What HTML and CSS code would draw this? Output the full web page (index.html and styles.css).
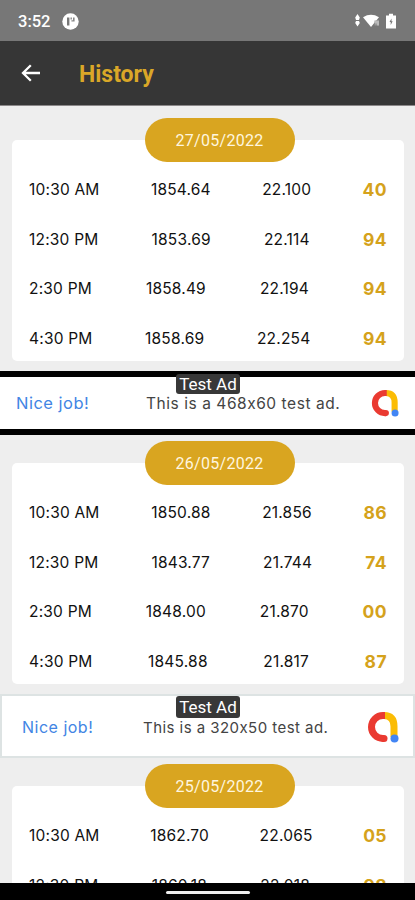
FILE: index.html
```
<!DOCTYPE html>
<html lang="en">
<head>
	<meta charset="utf-8">
	<meta name="viewport" content="width=device-width, initial-scale=1">
	<title>History</title>
	<link rel="stylesheet" href="styles.css">
</head>
<body>

	<div class="screen">

		<div class="status">
			<span class="clock">3:52</span>
			<svg class="app-dot" width="17" height="17" viewBox="0 0 17 17"><circle cx="8.5" cy="8.5" r="8.2" fill="#fff"/><path d="M5 12.5V4.5h2.4v8z" fill="#777"/><path d="M8.5 4.5h1.4v2H8.5zM11 4.5h1.6v4H9.4V7.2H11z" fill="#888"/></svg>
			<svg class="signals" width="44" height="18" viewBox="0 0 44 18">
				<path d="M3.5 2L5.8 5.5 5 8H2L1.2 5.5zM3.5 14.5L1.2 11 2 9h3l.8 2z" fill="#fff"/>
				<path d="M9 5.2Q17 .5 25 5.2L17 15z" fill="#fff"/>
				<path d="M20.5 8.5h4.5v5h-4.5z" fill="#999"/>
				<path d="M22 8.5v3M24 8.5v5" stroke="#ddd" stroke-width="1"/>
				<path d="M32 3.5h3V1.8h4v1.7h3v13H32z" fill="#fff"/>
				<path d="M37.5 6.5l-2 3.5h1.2v3l2-3.8h-1.2z" fill="#777"/>
			</svg>
		</div>

		<div class="toolbar">
			<svg width="20" height="18" viewBox="0 0 20 18"><path d="M19 9H2M9.8 1.2L2 9l7.8 7.8" fill="none" stroke="#fff" stroke-width="2.3"/></svg>
			<h1>History</h1>
		</div>

		<div class="content">

			<div class="day">
				<div class="date">27/05/2022</div>
				<div class="card">
					<div class="row"><span>10:30 AM</span><span>1854.64</span><span>22.100</span><b>40</b></div>
					<div class="row"><span>12:30 PM</span><span>1853.69</span><span>22.114</span><b>94</b></div>
					<div class="row"><span>2:30 PM</span><span>1858.49</span><span>22.194</span><b>94</b></div>
					<div class="row"><span>4:30 PM</span><span>1858.69</span><span>22.254</span><b>94</b></div>
				</div>
			</div>

			<div class="ad ad-wide">
				<span class="tag">Test Ad</span>
				<span class="nice">Nice job!</span>
				<span class="msg">This is a 468x60 test ad.</span>
				<svg class="logo" viewBox="0 0 32 32"><path d="M16 4.5h1q10 0 10 11V26" fill="none" stroke="#fbbc04" stroke-width="7"/><path d="M18 4.5h-2a11.5 11.5 0 0 0 0 23h1" fill="none" stroke="#ea3a31" stroke-width="7"/><circle cx="17" cy="27.5" r="3.5" fill="#ea3a31"/><circle cx="27.5" cy="27.5" r="4" fill="#4285f4"/></svg>
			</div>

			<div class="day">
				<div class="date">26/05/2022</div>
				<div class="card">
					<div class="row"><span>10:30 AM</span><span>1850.88</span><span>21.856</span><b>86</b></div>
					<div class="row"><span>12:30 PM</span><span>1843.77</span><span>21.744</span><b>74</b></div>
					<div class="row"><span>2:30 PM</span><span>1848.00</span><span>21.870</span><b>00</b></div>
					<div class="row"><span>4:30 PM</span><span>1845.88</span><span>21.817</span><b>87</b></div>
				</div>
			</div>

			<div class="ad ad-small">
				<span class="tag">Test Ad</span>
				<span class="nice">Nice job!</span>
				<span class="msg">This is a 320x50 test ad.</span>
				<svg class="logo" viewBox="0 0 32 32"><path d="M16 4.5h1q10 0 10 11V26" fill="none" stroke="#fbbc04" stroke-width="7"/><path d="M18 4.5h-2a11.5 11.5 0 0 0 0 23h1" fill="none" stroke="#ea3a31" stroke-width="7"/><circle cx="17" cy="27.5" r="3.5" fill="#ea3a31"/><circle cx="27.5" cy="27.5" r="4" fill="#4285f4"/></svg>
			</div>

			<div class="day">
				<div class="date">25/05/2022</div>
				<div class="card">
					<div class="row"><span>10:30 AM</span><span>1862.70</span><span>22.065</span><b>05</b></div>
					<div class="row"><span>12:30 PM</span><span>1860.18</span><span>22.018</span><b>98</b></div>
				</div>
			</div>

		</div>

		<div class="navbar"><span></span></div>

	</div>

</body>
</html>
```
FILE: styles.css
```
* {box-sizing: border-box;}
body {margin:0;background:#eee;font-family: Inter, "Liberation Sans", sans-serif;font-feature-settings: "calt" 0;color:#111;}
svg {display: block;flex:none;}

.screen {display: flex;flex-direction: column;height:900px;width:415px;overflow: hidden;}

.status {display: flex;align-items: center;flex:none;height:41px;padding:1px 17px 0 18px;background:#777;color:#fff;}
.clock {font:500 16.5px Roboto, sans-serif;width:32px;margin-right:12px;white-space: nowrap;}
.signals {margin-left:auto;}

.toolbar {display: flex;align-items: center;flex:none;height:65px;padding:0 21px;background:#363636;border-bottom:1px solid #8b8889;}
.toolbar h1 {margin:3px 0 0 38px;font:bold 23px Roboto, sans-serif;color:#daa728;}

.content {flex:1;min-height:0;overflow: hidden;padding-top:12px;}

.date {position: relative;width:150px;height:44px;margin:0 auto -22px;left:12px;border-radius:22px;background:#d9a520;color:#fff6df;font:400 16px/46px Roboto, sans-serif;letter-spacing:.3px;text-align: center;}
.card {height:221px;margin:0 11px 0 12px;padding:25px 17px 0 17px;background:#fff;border-radius:5px;}
.row {display: flex;justify-content: space-between;align-items: center;height:49.6px;font-size:15.5px;letter-spacing:.2px;white-space: nowrap;}
.row b {font-size:17.5px;font-weight:700;color:#d5a21b;letter-spacing:.4px;}

.ad {position: relative;display: flex;align-items: center;height:64px;margin:10px 0 6px;background:#fff;white-space: nowrap;}
.ad-wide {border:solid #000;border-width:6px 0;padding:0 16px;}
.ad-small {border:2px solid #dde3e3;padding:2px 14px 0 20px;}
.nice {font-size:16.5px;letter-spacing:.5px;color:#4285e4;}
.msg {font-size:15.5px;letter-spacing:.55px;color:#444;}
.ad-wide .nice {width:130px;}
.ad-small .nice {width:121px;font-size:16px;}
.ad-small .msg {font-size:15px;letter-spacing:.45px;}
.logo {width:28px;height:28px;margin-left:auto;}
.ad-small .logo {width:32px;height:32px;}
.tag {position: absolute;left:176px;top:-3px;width:64px;height:20px;border-radius:3px;background:#383838;color:#fff;font:400 17px/20px Roboto, sans-serif;text-align: center;}
.ad-small .tag {left:174px;top:0;height:22px;line-height:22px;}

.navbar {display: flex;justify-content: center;flex:none;height:17px;padding-top:8px;background:#000;}
.navbar span {width:84px;height:3px;border-radius:2px;background:#eee;}
```
